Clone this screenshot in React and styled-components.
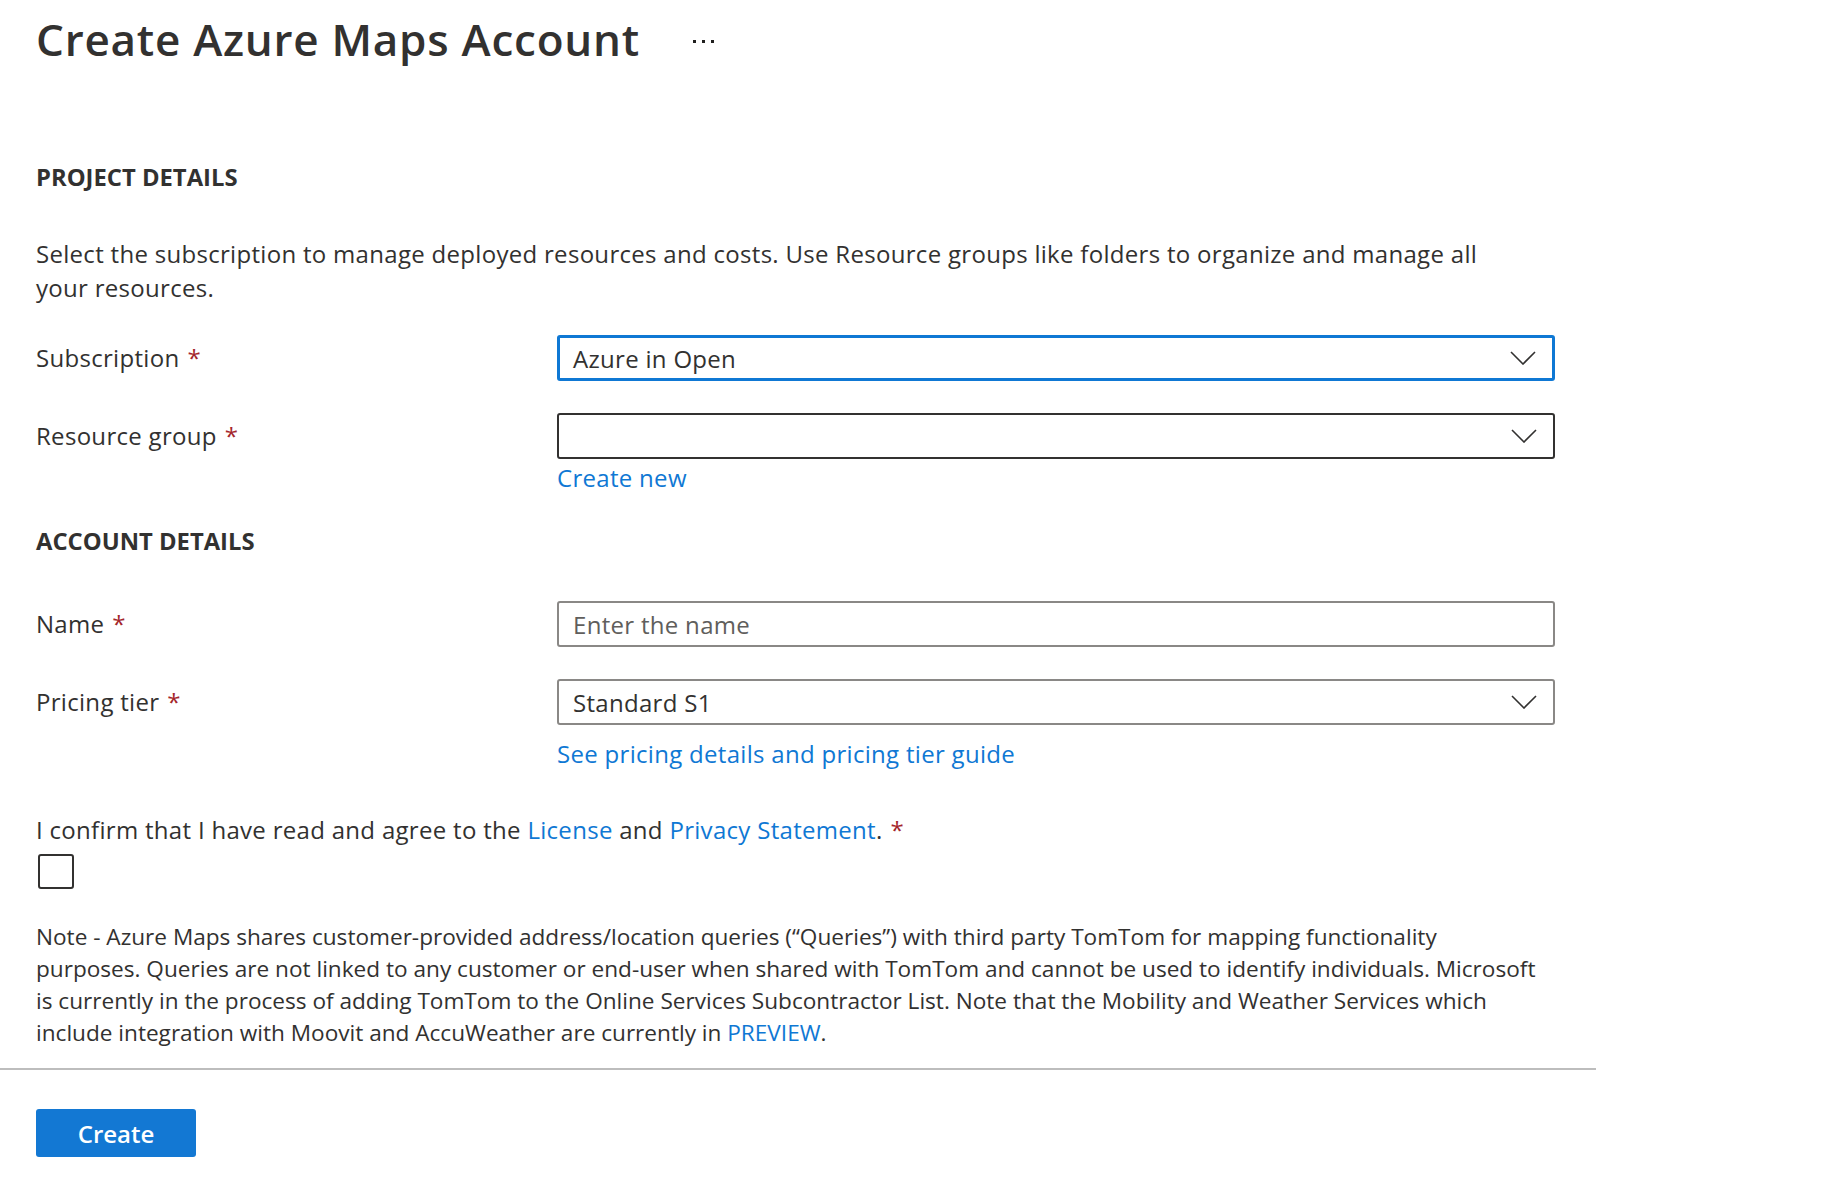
import React, {useState} from 'react';
import styled, {createGlobalStyle} from 'styled-components';

const GlobalStyle = createGlobalStyle`
  body {
    margin: 0;
    background: #ffffff;
    color: #323130;
    font-family: 'Open Sans', 'Noto Sans', sans-serif;
  }
  * {
    box-sizing: border-box;
  }
`;

const Page = styled.main`
  width: 1596px;
  padding-top: 11px;
  letter-spacing: 0.3px;
`;

const Inner = styled.div`
  padding: 0 41px 0 36px;
`;

const Header = styled.header`
  display: flex;
  align-items: center;
  gap: 53px;
`;

const Title = styled.h1`
  margin: 0;
  font-size: 44px;
  line-height: 56px;
  font-weight: 600;
  letter-spacing: 0.75px;
  color: #323130;
`;

const MoreButton = styled.button`
  display: flex;
  gap: 6px;
  padding: 0;
  border: none;
  background: none;
  margin-top: 4px;
`;

const Dot = styled.span`
  width: 3px;
  height: 3px;
  background: #201f1e;
`;

const SectionTitle = styled.h2`
  margin: ${props => props.$top}px 0 0 0;
  font-size: 23.8px;
  line-height: 30px;
  font-weight: 700;
  letter-spacing: 0;
  color: #323130;
`;

const Description = styled.p`
  margin: 45px 0 0 0;
  max-width: 1475px;
  font-size: 24px;
  line-height: 34px;
`;

const FormGrid = styled.div`
  display: grid;
  grid-template-columns: 521px 998px;
  row-gap: 32px;
  align-items: center;
  margin-top: ${props => props.$top}px;
`;

const Label = styled.label`
  font-size: 24px;
  line-height: 30px;
`;

const Required = styled.span`
  color: #a4262c;
  margin-left: 8px;
`;

const Box = styled.div`
  display: flex;
  align-items: center;
  height: 46px;
  padding-right: 16px;
  border-radius: 3px;
  border: ${props =>
    props.$state === 'focus'
      ? '3px solid #0f78d4'
      : props.$state === 'hover'
      ? '2px solid #323130'
      : '2px solid #8a8886'};
  padding-left: ${props => (props.$state === 'focus' ? '13px' : '14px')};
  font-size: 24px;
  color: #323130;
`;

const Value = styled.span`
  flex: 1;
  white-space: nowrap;
`;

const TextInput = styled.input`
  flex: 1;
  border: none;
  outline: none;
  padding: 0;
  font: inherit;
  letter-spacing: inherit;
  color: #323130;
  background: transparent;
  &::placeholder {
    color: #605e5c;
  }
`;

const Link = styled.a`
  color: #0f78d4;
  text-decoration: none;
  cursor: pointer;
`;

const FieldLink = styled(Link)`
  display: block;
  font-size: 24px;
  line-height: 30px;
  margin-top: ${props => props.$top}px;
`;

const Confirm = styled.p`
  margin: 46px 0 0 0;
  font-size: 24px;
  line-height: 30px;
`;

const CheckBox = styled.button`
  display: block;
  width: 36px;
  height: 35px;
  margin: 9px 0 0 2px;
  padding: 0;
  border: 2.5px solid #323130;
  border-radius: 3px;
  background: ${props => (props.$checked ? '#0f78d4' : '#ffffff')};
`;

const Note = styled.p`
  margin: 32px 0 0 0;
  max-width: 1507px;
  font-size: 22.6px;
  line-height: 32px;
  letter-spacing: 0;
`;

const Divider = styled.hr`
  margin: 19px 0 0 0;
  border: none;
  height: 2px;
  background: #bdbdbd;
`;

const Footer = styled.footer`
  padding: 39px 36px 30px;
`;

const PrimaryButton = styled.button`
  width: 160px;
  height: 48px;
  border: none;
  border-radius: 3px;
  background: #1378d3;
  color: #ffffff;
  font-family: 'Open Sans', 'Noto Sans', sans-serif;
  font-size: 24px;
  font-weight: 600;
`;

function Chevron() {
  return (
    <svg width='26' height='14' viewBox='0 0 26 14' fill='none'>
      <polyline points='1,1 13,13 25,1' stroke='#323130' strokeWidth='1.6' />
    </svg>
  );
}

function Dropdown({value, state}) {
  return (
    <Box $state={state}>
      <Value>{value}</Value>
      <Chevron />
    </Box>
  );
}

function App() {
  const [checked, setChecked] = useState(false);

  return (
    <Page>
      <GlobalStyle />
      <Inner>
        <Header>
          <Title>Create Azure Maps Account</Title>
          <MoreButton aria-label='More'>
            <Dot />
            <Dot />
            <Dot />
          </MoreButton>
        </Header>

        <SectionTitle $top={95}>PROJECT DETAILS</SectionTitle>
        <Description>
          Select the subscription to manage deployed resources and costs. Use Resource groups like
          folders to organize and manage all your resources.
        </Description>

        <FormGrid $top={30}>
          <Label>
            Subscription<Required>*</Required>
          </Label>
          <Dropdown value='Azure in Open' state='focus' />
          <Label>
            Resource group<Required>*</Required>
          </Label>
          <Dropdown value='' state='hover' />
        </FormGrid>
        <FormGrid>
          <span />
          <FieldLink $top={4}>Create new</FieldLink>
        </FormGrid>

        <SectionTitle $top={33}>ACCOUNT DETAILS</SectionTitle>

        <FormGrid $top={45}>
          <Label>
            Name<Required>*</Required>
          </Label>
          <Box>
            <TextInput placeholder='Enter the name' />
          </Box>
          <Label>
            Pricing tier<Required>*</Required>
          </Label>
          <Dropdown value='Standard S1' />
        </FormGrid>
        <FormGrid>
          <span />
          <FieldLink $top={14}>See pricing details and pricing tier guide</FieldLink>
        </FormGrid>

        <Confirm>
          I confirm that I have read and agree to the <Link>License</Link> and{' '}
          <Link>Privacy Statement</Link>.<Required>*</Required>
        </Confirm>
        <CheckBox $checked={checked} onClick={() => setChecked(!checked)} aria-label='Confirm' />

        <Note>
          Note - Azure Maps shares customer-provided address/location queries (“Queries”) with third
          party TomTom for mapping functionality purposes. Queries are not linked to any customer or
          end-user when shared with TomTom and cannot be used to identify individuals. Microsoft is
          currently in the process of adding TomTom to the Online Services Subcontractor List. Note
          that the Mobility and Weather Services which include integration with Moovit and
          AccuWeather are currently in <Link>PREVIEW</Link>.
        </Note>
      </Inner>
      <Divider />
      <Footer>
        <PrimaryButton>Create</PrimaryButton>
      </Footer>
    </Page>
  );
}

export default App;
